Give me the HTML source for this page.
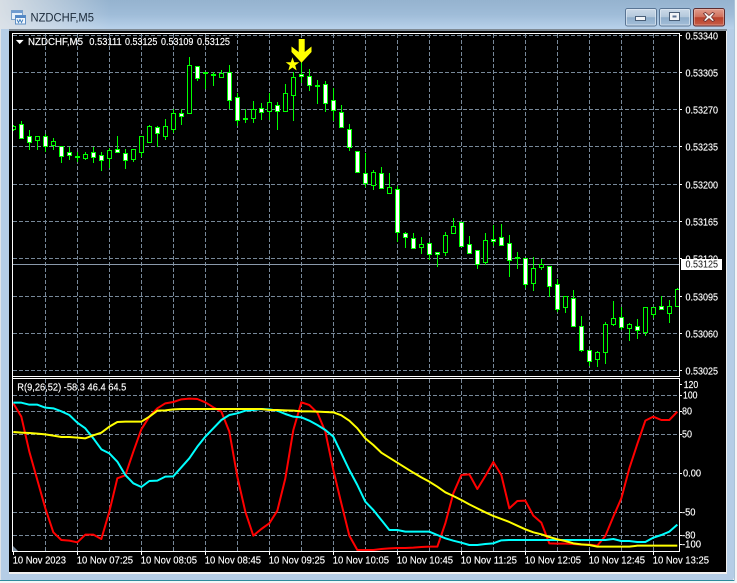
<!DOCTYPE html>
<html lang="en">
<head>
<meta charset="utf-8">
<title>NZDCHF,M5</title>
<style>
html,body{margin:0;padding:0;width:737px;height:583px;overflow:hidden;background:#f4f5f6}
svg{display:block;font-family:"Liberation Sans",sans-serif}
</style>
</head>
<body>
<svg width="737" height="583" viewBox="0 0 737 583" xmlns="http://www.w3.org/2000/svg">
<defs>
<linearGradient id="tb" x1="0" y1="0" x2="0" y2="1"><stop offset="0" stop-color="#95b3cf"/><stop offset=".5" stop-color="#9fbcd8"/><stop offset="1" stop-color="#b8d1ea"/></linearGradient>
<linearGradient id="fade" x1="0" y1="0" x2="1" y2="0"><stop offset="0" stop-color="#e2e5e8" stop-opacity=".85"/><stop offset="1" stop-color="#e2e5e8" stop-opacity="0"/></linearGradient>
<linearGradient id="btn" x1="0" y1="0" x2="0" y2="1"><stop offset="0" stop-color="#cddbe9"/><stop offset=".48" stop-color="#b4c8dc"/><stop offset=".52" stop-color="#8fadca"/><stop offset="1" stop-color="#a5c0da"/></linearGradient>
<linearGradient id="cls" x1="0" y1="0" x2="0" y2="1"><stop offset="0" stop-color="#e2a090"/><stop offset=".48" stop-color="#d0705c"/><stop offset=".52" stop-color="#b8402a"/><stop offset="1" stop-color="#c8604a"/></linearGradient>
<clipPath id="main"><rect x="13" y="34" width="666" height="342"/></clipPath>
<clipPath id="sub"><rect x="13" y="379" width="666" height="172"/></clipPath>
</defs>

<!-- window frame -->
<rect x="0" y="0" width="734" height="581" rx="4" fill="#b5cde6"/>
<rect x="0" y="0" width="734" height="29" fill="url(#tb)"/>
<rect x="0" y="0" width="110" height="29" fill="url(#fade)"/>
<rect x="0" y="29" width="1" height="552" fill="#dfe3e8"/>
<rect x="0" y="580" width="734" height="1" fill="#2d8a9c"/>
<rect x="734" y="0" width="1" height="581" fill="#a9c3d8"/>
<rect x="9" y="29" width="718" height="2" fill="#7f8a94"/>
<rect x="9" y="31" width="717" height="541" fill="#000"/>
<rect x="9" y="572" width="718" height="2" fill="#f0f0f0"/>
<rect x="726" y="31" width="1" height="543" fill="#f0f0f0"/>

<!-- title -->
<g>
<rect x="11.5" y="10.5" width="11" height="9" fill="#e6f0fa" stroke="#7aa0c8"/>
<rect x="11.5" y="10.5" width="11" height="2.5" fill="#6f9bd0"/>
<rect x="15.5" y="15.5" width="10" height="8.5" fill="#f4f8fc" stroke="#5f8fc4"/>
<rect x="15.5" y="15.5" width="10" height="2.5" fill="#4f86c6"/>
<path d="M17 19.5l1.5 3 1.5-3 1.5 3 1.5-3" fill="none" stroke="#3f7fbf" stroke-width=".9"/>
</g>
<text x="30.5" y="21.7" font-size="11.5" textLength="63.5" lengthAdjust="spacingAndGlyphs" fill="#1b2a3a">NZDCHF,M5</text>

<!-- buttons -->
<rect x="625.5" y="8.5" width="31" height="17.5" rx="2" fill="url(#btn)" stroke="#5a7594"/>
<rect x="626.5" y="9.5" width="29" height="15.5" rx="1" fill="none" stroke="#dfe9f3" stroke-opacity=".7"/>
<rect x="635.5" y="16.5" width="10" height="4" fill="#f2f5f8" stroke="#4a5f78"/>
<rect x="659.5" y="8.5" width="31" height="17.5" rx="2" fill="url(#btn)" stroke="#5a7594"/>
<rect x="660.5" y="9.5" width="29" height="15.5" rx="1" fill="none" stroke="#dfe9f3" stroke-opacity=".7"/>
<rect x="669.5" y="12.5" width="10" height="8" fill="#f2f5f8" stroke="#4a5f78"/>
<rect x="672.5" y="15.5" width="4" height="2" fill="#5a7090"/>
<rect x="693.5" y="8.5" width="31" height="17.5" rx="2" fill="url(#cls)" stroke="#5c2c30"/>
<rect x="694.5" y="9.5" width="29" height="15.5" rx="1" fill="none" stroke="#efc4b8" stroke-opacity=".5"/>
<path d="M703.5 13.5l2-1 3.5 3 3.5-3 2 1-3 3.500 3 3.500-2 1-3.500-3-3.500 3-2-1 3-3.500z" fill="#f4f1ef" stroke="#6e3030" stroke-width=".8"/>

<!-- grid main -->
<g stroke="#778899" fill="none" stroke-dasharray="4 2">
<path d="M13 35.500H679M13 72.500H679M13 109.500H679M13 146.500H679M13 184.500H679M13 221.500H679M13 258.500H679M13 296.500H679M13 333.500H679M13 370.500H679"/>
<path d="M45.500 34V376M77.500 34V376M109.500 34V376M141.500 34V376M173.500 34V376M205.500 34V376M237.500 34V376M269.500 34V376M301.500 34V376M333.500 34V376M365.500 34V376M397.500 34V376M429.500 34V376M461.500 34V376M493.500 34V376M525.500 34V376M557.500 34V376M589.500 34V376M621.500 34V376M653.500 34V376"/>
<path d="M13 395.500H679M13 411.500H679M13 434.500H679M13 473.500H679M13 512.500H679M13 535.500H679"/>
<path d="M45.500 379V551M77.500 379V551M109.500 379V551M141.500 379V551M173.500 379V551M205.500 379V551M237.500 379V551M269.500 379V551M301.500 379V551M333.500 379V551M365.500 379V551M397.500 379V551M429.500 379V551M461.500 379V551M493.500 379V551M525.500 379V551M557.500 379V551M589.500 379V551M621.500 379V551M653.500 379V551"/>
</g>
<!-- bid line -->
<rect x="13" y="264" width="666" height="1" fill="#8a99aa"/>

<!-- candles -->
<g clip-path="url(#main)">
<path fill="none" stroke="#00ff00" d="M13.500 125V131M21.500 121V139M29.500 130V150M37.500 136V150M45.500 134V152M53.500 138V150M61.500 146V163M69.500 147V160M77.500 152V162M85.500 152V160M93.500 147V163M101.500 152V171M109.500 148V168M117.500 136V152M125.500 149V169M133.500 149V162M141.500 136V157M149.500 125V142M157.500 126V147M165.500 119V140M173.500 109V133M181.500 109V125M189.500 57V113M197.500 66V81M205.500 72V89M213.500 72V86M221.500 70V77M229.500 65V109M237.500 93V126M245.500 109V123M253.500 101V123M261.500 103V120M269.500 93V120M277.500 102V130M285.500 84V111M293.500 72V121M301.500 62V83M309.500 69V91M317.500 80V104M325.500 81V112M333.500 88V121M341.500 105V127M349.500 124V151M357.500 151V172M365.500 153V187M373.500 170V190M381.500 167V188M389.500 173V193M397.500 186V242M405.500 232V248M413.500 233V248M421.500 237V254M429.500 242V260M437.500 252V267M445.500 232V256M453.500 218V234M461.500 222V246M469.500 236V254M477.500 250V269M485.500 233V265M493.500 225V246M501.500 224V245M509.500 235V277M517.500 252V269M525.500 258V288M533.500 257V291M541.500 259V270M549.500 266V297M557.500 279V312M565.500 296V313M573.500 290V326M581.500 316V352M589.500 350V366M597.500 351V367M605.500 322V364M613.500 301V326M621.500 307V330M629.500 323V341M637.500 319V339M645.500 307V336M653.500 307V318M661.500 296V309M669.500 300V323M677.500 288V307"/>
<path fill="#fff" stroke="#00ff00" d="M19.500 124.500h4v14h-4zM27.500 136.500h4v6h-4zM43.500 136.500h4v10h-4zM59.500 146.500h4v10h-4zM67.500 152.500h4v3h-4zM91.500 152.500h4v5h-4zM99.500 155.500h4v5h-4zM115.500 149.500h4v3h-4zM123.500 153.500h4v7h-4zM155.500 127.500h4v6h-4zM179.500 113.500h4v3h-4zM195.500 66.500h4v12h-4zM227.500 72.500h4v28h-4zM235.500 97.500h4v23h-4zM259.500 108.500h4v4h-4zM275.500 105.500h4v6h-4zM299.500 74.500h4v2h-4zM307.500 76.500h4v9h-4zM323.500 84.500h4v19h-4zM331.500 100.500h4v10h-4zM339.500 112.500h4v15h-4zM347.500 129.500h4v18h-4zM355.500 151.500h4v21h-4zM363.500 173.500h4v10h-4zM379.500 173.500h4v15h-4zM395.500 189.500h4v43h-4zM403.500 233.500h4v4h-4zM411.500 238.500h4v10h-4zM427.500 243.500h4v11h-4zM435.500 252.500h4v2h-4zM459.500 222.500h4v24h-4zM467.500 244.500h4v9h-4zM475.500 250.500h4v14h-4zM491.500 239.500h4v2h-4zM499.500 237.500h4v8h-4zM507.500 243.500h4v17h-4zM523.500 258.500h4v26h-4zM547.500 266.500h4v20h-4zM555.500 284.500h4v25h-4zM571.500 298.500h4v28h-4zM579.500 326.500h4v24h-4zM587.500 350.500h4v11h-4zM619.500 317.500h4v10h-4zM635.500 326.500h4v4h-4zM659.500 306.500h4v3h-4z"/>
<path fill="#000" stroke="#00ff00" d="M11.500 126.500h4v3h-4zM35.500 136.500h4v4h-4zM51.500 141.500h4v4h-4zM83.500 154.500h4v4h-4zM107.500 150.500h4v8h-4zM131.500 149.500h4v10h-4zM139.500 136.500h4v16h-4zM147.500 126.500h4v16h-4zM163.500 126.500h4v10h-4zM171.500 113.500h4v16h-4zM187.500 65.500h4v48h-4zM219.500 73.500h4v4h-4zM251.500 109.500h4v9h-4zM267.500 102.500h4v9h-4zM283.500 93.500h4v18h-4zM291.500 77.500h4v18h-4zM371.500 172.500h4v13h-4zM387.500 187.500h4v6h-4zM419.500 244.500h4v3h-4zM443.500 235.500h4v17h-4zM451.500 226.500h4v7h-4zM483.500 240.500h4v22h-4zM531.500 268.500h4v15h-4zM539.500 264.500h4v3h-4zM563.500 296.500h4v11h-4zM595.500 352.500h4v7h-4zM603.500 324.500h4v28h-4zM611.500 318.500h4v6h-4zM627.500 324.500h4v4h-4zM643.500 307.500h4v25h-4zM651.500 307.500h4v7h-4zM667.500 306.500h4v7h-4zM675.500 289.500h4v17h-4z"/>
<path fill="none" stroke="#00ff00" stroke-width="2" d="M75 157h5M203 73h5M211 75h5M243 119h5M315 86h5M515 258h5"/>
</g>

<!-- arrow + star -->
<polygon fill="#ffff00" points="298.700,39 304.700,39 304.700,52 311.500,46.500 311.500,52 301.500,62.700 291.500,52 291.500,46.500 298.700,52"/>
<polygon fill="#ffff00" points="292.500,57.300 294.200,62.200 299.300,62.300 295.200,65.400 296.700,70.500 292.500,67.500 288.300,70.500 289.800,65.400 285.700,62.300 290.800,62.200"/>

<!-- indicator -->
<g clip-path="url(#sub)">
<g transform="translate(0 370) scale(.33333)" fill="none" stroke-width="6" stroke-linejoin="round">
<polyline stroke="#ff0000" points="40,100 64,140 88,245 112,330 136,415 160,487 184,510 208,512 232,517 256,494 280,494 304,507 328,425 352,325 376,316 400,245 424,178 448,140 472,115 496,100 520,96 544,88 568,86 592,87 616,97 640,112 664,125 688,185 712,320 736,425 760,497 784,477 808,460 832,422 856,325 880,180 904,97 928,105 952,128 976,185 1000,300 1024,400 1048,497 1072,540 1096,540 1120,540 1144,537 1168,535 1192,534 1216,534 1240,533 1264,531 1288,530 1312,530 1336,460 1360,370 1384,315 1408,313 1432,357 1456,318 1480,276 1504,315 1528,415 1552,393 1576,392 1600,437 1624,458 1648,520 1672,521 1696,521 1720,522 1744,524 1768,524 1792,527 1816,498 1840,440 1864,385 1888,295 1912,222 1936,152 1960,140 1984,150 2008,150 2032,125"/>
<polyline stroke="#00ffff" points="40,98 64,98 88,104 112,104 136,113 160,115 184,124 208,135 232,158 256,175 280,205 304,238 328,250 352,275 376,315 400,340 424,351 448,333 472,332 496,320 520,319 544,292 568,265 592,230 616,200 640,175 664,150 688,135 712,130 736,122 760,120 784,117 808,118 832,122 856,132 880,140 904,142 928,152 952,165 976,180 1000,200 1024,250 1048,300 1072,345 1096,395 1120,420 1144,450 1168,480 1192,480 1216,485 1240,485 1264,485 1288,485 1312,495 1336,505 1360,512 1384,518 1408,525 1432,525 1456,522 1480,520 1504,511 1528,510 1552,510 1576,510 1600,510 1624,510 1648,510 1672,510 1696,510 1720,510 1744,510 1768,510 1792,510 1816,510 1840,507 1864,513 1888,513 1912,516 1936,516 1960,503 1984,495 2008,485 2032,464"/>
<polyline stroke="#ffff00" points="40,186 64,188 88,189 112,191 136,193 160,197 184,201 208,201 232,203 256,205 280,196 304,188 328,170 352,156 376,155 400,155 424,155 448,140 472,122 496,121 520,118 544,117 568,117 592,117 616,117 640,117 664,117 688,117 712,117 736,117 760,117 784,117 808,120 832,120 856,121 880,122 904,124 928,124 952,125 976,126 1000,127 1024,136 1048,152 1072,175 1096,205 1120,225 1144,248 1168,263 1192,278 1216,293 1240,308 1264,322 1288,335 1312,350 1336,367 1360,378 1384,390 1408,403 1432,415 1456,427 1480,438 1504,447 1528,456 1552,467 1576,478 1600,487 1624,493 1648,501 1672,508 1696,513 1720,520 1744,523 1768,525 1792,530 1816,530 1840,530 1864,530 1888,530 1912,527 1936,527 1960,527 1984,527 2008,527 2032,527"/>
</g>
</g>
<polygon points="13,546 18,551 13,551" fill="#778899"/>

<!-- borders -->
<rect x="12" y="33" width="1" height="519" fill="#fff"/>
<rect x="12" y="33" width="668" height="1" fill="#fff"/>
<rect x="679" y="33" width="1" height="344" fill="#fff"/>
<rect x="12" y="376" width="668" height="1" fill="#fff"/>
<rect x="12" y="378" width="668" height="1" fill="#fff"/>
<rect x="679" y="378" width="1" height="174" fill="#fff"/>
<rect x="12" y="551" width="668" height="1" fill="#fff"/>

<!-- ticks -->
<path stroke="#fff" fill="none" d="M680 35.500h2M680 72.500h2M680 109.500h2M680 146.500h2M680 184.500h2M680 221.500h2M680 258.500h2M680 296.500h2M680 333.500h2M680 370.500h2M680 384.500h2M680 395.500h2M680 411.500h2M680 434.500h2M680 473.500h2M680 512.500h2M680 535.500h2M680 544.500h2M13.500 552v3M77.500 552v3M141.500 552v3M205.500 552v3M269.500 552v3M333.500 552v3M397.500 552v3M461.500 552v3M525.500 552v3M589.500 552v3M653.500 552v3"/>

<!-- labels -->
<g fill="#fff" font-size="9.800" stroke="#fff" stroke-width=".15">
<polygon points="16,40 23.500,40 19.700,44"/>
<text x="28" y="45" textLength="55" lengthAdjust="spacingAndGlyphs">NZDCHF,M5</text>
<text x="89.300" y="45" textLength="32.400" lengthAdjust="spacingAndGlyphs">0.53111</text>
<text x="125" y="45" textLength="32.400" lengthAdjust="spacingAndGlyphs">0.53125</text>
<text x="161" y="45" textLength="32.400" lengthAdjust="spacingAndGlyphs">0.53109</text>
<text x="197" y="45" textLength="33" lengthAdjust="spacingAndGlyphs">0.53125</text>

<text x="685.500" y="39.300" textLength="32.500" lengthAdjust="spacingAndGlyphs">0.53340</text>
<text x="685.500" y="76.300" textLength="32.500" lengthAdjust="spacingAndGlyphs">0.53305</text>
<text x="685.500" y="113.300" textLength="32.500" lengthAdjust="spacingAndGlyphs">0.53270</text>
<text x="685.500" y="150.300" textLength="32.500" lengthAdjust="spacingAndGlyphs">0.53235</text>
<text x="685.500" y="188.300" textLength="32.500" lengthAdjust="spacingAndGlyphs">0.53200</text>
<text x="685.500" y="225.300" textLength="32.500" lengthAdjust="spacingAndGlyphs">0.53165</text>
<text x="685.500" y="262.300" textLength="32.500" lengthAdjust="spacingAndGlyphs">0.53120</text>
<text x="685.500" y="300.300" textLength="32.500" lengthAdjust="spacingAndGlyphs">0.53095</text>
<text x="685.500" y="337.300" textLength="32.500" lengthAdjust="spacingAndGlyphs">0.53060</text>
<text x="685.500" y="374.300" textLength="32.500" lengthAdjust="spacingAndGlyphs">0.53025</text>

<text x="17.300" y="390.700" textLength="109" lengthAdjust="spacingAndGlyphs">R(9,26,52) -58.3 46.4 64.5</text>

<text x="683.700" y="388" textLength="14.500" lengthAdjust="spacingAndGlyphs">120</text>
<text x="683" y="398.500" textLength="14.500" lengthAdjust="spacingAndGlyphs">100</text>
<text x="682" y="414.500" textLength="10" lengthAdjust="spacingAndGlyphs">80</text>
<text x="682" y="437.500" textLength="10" lengthAdjust="spacingAndGlyphs">50</text>
<text x="683" y="476.700" textLength="18" lengthAdjust="spacingAndGlyphs">0.00</text>
<text x="682" y="515.700" textLength="13.500" lengthAdjust="spacingAndGlyphs">-50</text>
<text x="682" y="538.300" textLength="13.500" lengthAdjust="spacingAndGlyphs">-80</text>
<text x="682" y="547.700" textLength="19" lengthAdjust="spacingAndGlyphs">-100</text>

<text x="12.700" y="563.300" textLength="53.300" lengthAdjust="spacingAndGlyphs">10 Nov 2023</text>
<text x="76.700" y="563.300" textLength="56.300" lengthAdjust="spacingAndGlyphs">10 Nov 07:25</text>
<text x="140.700" y="563.300" textLength="56.300" lengthAdjust="spacingAndGlyphs">10 Nov 08:05</text>
<text x="204.700" y="563.300" textLength="56.300" lengthAdjust="spacingAndGlyphs">10 Nov 08:45</text>
<text x="268.700" y="563.300" textLength="56.300" lengthAdjust="spacingAndGlyphs">10 Nov 09:25</text>
<text x="332.700" y="563.300" textLength="56.300" lengthAdjust="spacingAndGlyphs">10 Nov 10:05</text>
<text x="396.700" y="563.300" textLength="56.300" lengthAdjust="spacingAndGlyphs">10 Nov 10:45</text>
<text x="460.700" y="563.300" textLength="56.300" lengthAdjust="spacingAndGlyphs">10 Nov 11:25</text>
<text x="524.700" y="563.300" textLength="56.300" lengthAdjust="spacingAndGlyphs">10 Nov 12:05</text>
<text x="588.700" y="563.300" textLength="56.300" lengthAdjust="spacingAndGlyphs">10 Nov 12:45</text>
<text x="652.700" y="563.300" textLength="56.300" lengthAdjust="spacingAndGlyphs">10 Nov 13:25</text>
</g>

<!-- current price tag -->
<rect x="681" y="259" width="41" height="11" fill="#fff"/>
<text x="685.500" y="267.700" font-size="9.800" textLength="32.500" lengthAdjust="spacingAndGlyphs" fill="#111">0.53125</text>
</svg>
</body>
</html>
